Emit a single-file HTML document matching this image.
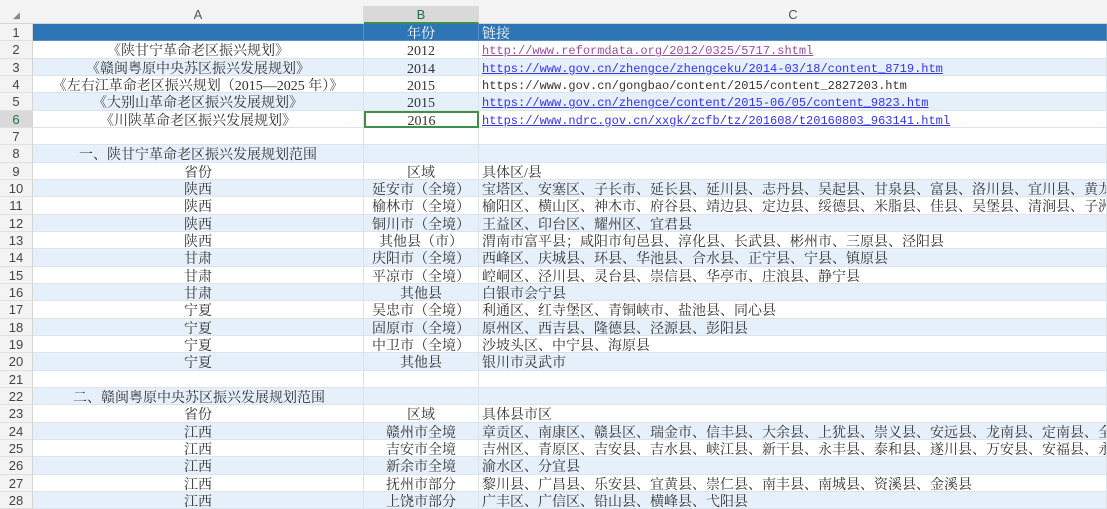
<!DOCTYPE html>
<html><head><meta charset="utf-8"><style>
*{margin:0;padding:0;box-sizing:border-box}
body{width:1107px;height:501px;overflow:hidden;background:#fff;font-family:"Liberation Serif","Noto Serif CJK SC",serif;font-size:14px;color:#333;position:relative}
.hdr{position:absolute;top:0;left:0;width:1107px;height:24px;background:#f3f3f3;border-bottom:1px solid #d4d4d4}
.hdr div{position:absolute;top:6px;height:18px;line-height:18px;text-align:center;font-family:"Liberation Sans",sans-serif;font-size:13px;color:#555;border-right:1px solid #dcdcdc}
.rows{position:absolute;top:24px;left:0;width:1107px}
.r{height:17.33px;position:relative;white-space:nowrap}
.r div{position:absolute;top:0;height:17.33px;padding-top:4px;line-height:14px;overflow:hidden;border-right:1px solid #dde3ea;border-bottom:1px solid #dde3ea}
.r div.n{padding-top:0;line-height:18px}
.n{left:0;width:33px;background:#f3f3f3;text-align:center;font-family:"Liberation Sans",sans-serif;font-size:13px;color:#444;border-right:1px solid #d4d4d4!important;border-bottom:1px solid #e0e0e0!important}
.a{left:33px;width:331px;text-align:center}
.b{left:364px;width:115px;text-align:center}
.c{left:479px;width:628px;padding-left:3px}
.bl div.a,.bl div.b,.bl div.c{background:#e6f0fa}
.h div.a,.h div.b,.h div.c{background:#2e75b6;color:#fff;border-color:#5b8fc4}
a{font-family:"Liberation Mono",monospace;font-size:12px;color:#3333ee;text-decoration:underline;position:relative;top:-1px}
.m{font-family:"Liberation Mono",monospace;font-size:12px;position:relative;top:-1px}
.l{text-align:left!important;padding-left:46px}
</style></head><body>
<div class="hdr">
<div style="left:0;width:33px;border:none;color:#888;font-size:9px">◢</div>
<div style="left:33px;width:331px">A</div>
<div style="left:364px;width:115px;background:#d9d9d9;color:#1e7145;border-bottom:2px solid #3d8f4a">B</div>
<div style="left:479px;width:628px;border:none">C</div>
</div>
<div class="rows">
<div class="r h"><div class="n">1</div><div class="a"></div><div class="b">年份</div><div class="c">链接</div></div>
<div class="r"><div class="n">2</div><div class="a">《陕甘宁革命老区振兴规划》</div><div class="b">2012</div><div class="c"><a style="color:#954f9e">http://www.reformdata.org/2012/0325/5717.shtml</a></div></div>
<div class="r bl"><div class="n">3</div><div class="a">《赣闽粤原中央苏区振兴发展规划》</div><div class="b">2014</div><div class="c"><a>https://www.gov.cn/zhengce/zhengceku/2014-03/18/content_8719.htm</a></div></div>
<div class="r"><div class="n">4</div><div class="a">《左右江革命老区振兴规划（2015—2025 年）》</div><div class="b">2015</div><div class="c"><span class="m">https://www.gov.cn/gongbao/content/2015/content_2827203.htm</span></div></div>
<div class="r bl"><div class="n">5</div><div class="a">《大别山革命老区振兴发展规划》</div><div class="b">2015</div><div class="c"><a>https://www.gov.cn/zhengce/content/2015-06/05/content_9823.htm</a></div></div>
<div class="r"><div class="n" style="color:#1e7145;background:#d9d9d9">6</div><div class="a">《川陕革命老区振兴发展规划》</div><div class="b" style="border:2px solid #3d8f4a;padding-top:2px;line-height:13px">2016</div><div class="c"><a>https://www.ndrc.gov.cn/xxgk/zcfb/tz/201608/t20160803_963141.html</a></div></div>
<div class="r"><div class="n">7</div><div class="a"></div><div class="b"></div><div class="c"></div></div>
<div class="r bl"><div class="n">8</div><div class="a l">一、陕甘宁革命老区振兴发展规划范围</div><div class="b"></div><div class="c"></div></div>
<div class="r"><div class="n">9</div><div class="a">省份</div><div class="b">区域</div><div class="c">具体区/县</div></div>
<div class="r bl"><div class="n">10</div><div class="a">陕西</div><div class="b">延安市（全境）</div><div class="c">宝塔区、安塞区、子长市、延长县、延川县、志丹县、吴起县、甘泉县、富县、洛川县、宜川县、黄龙县</div></div>
<div class="r"><div class="n">11</div><div class="a">陕西</div><div class="b">榆林市（全境）</div><div class="c">榆阳区、横山区、神木市、府谷县、靖边县、定边县、绥德县、米脂县、佳县、吴堡县、清涧县、子洲县</div></div>
<div class="r bl"><div class="n">12</div><div class="a">陕西</div><div class="b">铜川市（全境）</div><div class="c">王益区、印台区、耀州区、宜君县</div></div>
<div class="r"><div class="n">13</div><div class="a">陕西</div><div class="b">其他县（市）</div><div class="c">渭南市富平县；咸阳市旬邑县、淳化县、长武县、彬州市、三原县、泾阳县</div></div>
<div class="r bl"><div class="n">14</div><div class="a">甘肃</div><div class="b">庆阳市（全境）</div><div class="c">西峰区、庆城县、环县、华池县、合水县、正宁县、宁县、镇原县</div></div>
<div class="r"><div class="n">15</div><div class="a">甘肃</div><div class="b">平凉市（全境）</div><div class="c">崆峒区、泾川县、灵台县、崇信县、华亭市、庄浪县、静宁县</div></div>
<div class="r bl"><div class="n">16</div><div class="a">甘肃</div><div class="b">其他县</div><div class="c">白银市会宁县</div></div>
<div class="r"><div class="n">17</div><div class="a">宁夏</div><div class="b">吴忠市（全境）</div><div class="c">利通区、红寺堡区、青铜峡市、盐池县、同心县</div></div>
<div class="r bl"><div class="n">18</div><div class="a">宁夏</div><div class="b">固原市（全境）</div><div class="c">原州区、西吉县、隆德县、泾源县、彭阳县</div></div>
<div class="r"><div class="n">19</div><div class="a">宁夏</div><div class="b">中卫市（全境）</div><div class="c">沙坡头区、中宁县、海原县</div></div>
<div class="r bl"><div class="n">20</div><div class="a">宁夏</div><div class="b">其他县</div><div class="c">银川市灵武市</div></div>
<div class="r"><div class="n">21</div><div class="a"></div><div class="b"></div><div class="c"></div></div>
<div class="r bl"><div class="n">22</div><div class="a l" style="padding-left:40px">二、赣闽粤原中央苏区振兴发展规划范围</div><div class="b"></div><div class="c"></div></div>
<div class="r"><div class="n">23</div><div class="a">省份</div><div class="b">区域</div><div class="c">具体县市区</div></div>
<div class="r bl"><div class="n">24</div><div class="a">江西</div><div class="b">赣州市全境</div><div class="c">章贡区、南康区、赣县区、瑞金市、信丰县、大余县、上犹县、崇义县、安远县、龙南县、定南县、全南县</div></div>
<div class="r"><div class="n">25</div><div class="a">江西</div><div class="b">吉安市全境</div><div class="c">吉州区、青原区、吉安县、吉水县、峡江县、新干县、永丰县、泰和县、遂川县、万安县、安福县、永新县</div></div>
<div class="r bl"><div class="n">26</div><div class="a">江西</div><div class="b">新余市全境</div><div class="c">渝水区、分宜县</div></div>
<div class="r"><div class="n">27</div><div class="a">江西</div><div class="b">抚州市部分</div><div class="c">黎川县、广昌县、乐安县、宜黄县、崇仁县、南丰县、南城县、资溪县、金溪县</div></div>
<div class="r bl"><div class="n">28</div><div class="a">江西</div><div class="b">上饶市部分</div><div class="c">广丰区、广信区、铅山县、横峰县、弋阳县</div></div>
</div>
</body></html>
